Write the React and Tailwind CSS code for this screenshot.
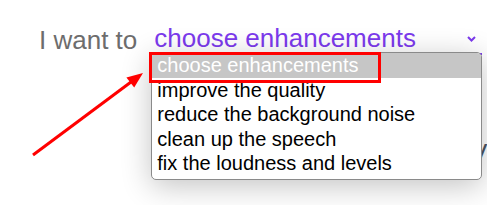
import React from 'react';

const options = [
  'choose enhancements',
  'improve the quality',
  'reduce the background noise',
  'clean up the speech',
  'fix the loudness and levels',
];

export default function App() {
  return (
    <div className="relative w-[487px] h-[205px] overflow-hidden bg-white font-['Liberation_Sans',Arial,sans-serif]">
      {/* sentence with select */}
      <div className="pt-[23px] pl-[39px] flex items-end">
        <span className="text-[26px] leading-[30px] text-[#6d6d6d] mr-[14px] whitespace-nowrap">I want to</span>
        <div className="relative w-[331px] flex items-center border-b-2 border-dashed border-[#7c3aed] pl-[3px]">
          <span className="text-[26px] leading-[30px] text-[#7c3aed] whitespace-nowrap">choose enhancements</span>
          <svg className="ml-auto mr-[6px] mt-[2px]" width="9" height="6" viewBox="0 0 9 6" fill="none">
            <path d="M1 1l3.5 3.5L8 1" stroke="#7c3aed" strokeWidth="2" />
          </svg>

          {/* open dropdown list */}
          <div className="absolute left-0 top-full mt-[-1px] w-[331px] z-10 bg-white border border-[#8a8a8a] rounded-[5px] overflow-hidden pb-[3px] shadow-[0_6px_30px_rgba(0,0,0,0.24)]">
            {options.map((opt, i) => (
              <div
                key={opt}
                className={`h-[24.6px] leading-[24.6px] pl-[5px] text-[20px] whitespace-nowrap ${i === 0 ? 'bg-[#c6c6c6] text-white' : 'text-black'}`}
              >
                {opt}
              </div>
            ))}
          </div>

          {/* highlight box */}
          <div className="absolute left-[-2px] top-[29px] w-[232px] h-[31px] border-[3px] border-[#ff0000] z-20"></div>
        </div>
      </div>

      {/* page text hidden behind the list */}
      <div className="mt-[83px] pl-[470px] text-[26px] leading-[30px] text-[#4b5563]">V</div>

      {/* annotation arrow */}
      <svg className="absolute top-0 left-0 pointer-events-none z-30" width="487" height="205" viewBox="0 0 487 205">
        <line x1="33" y1="155" x2="131" y2="82" stroke="#ff0000" strokeWidth="3" />
        <polygon points="143,73 134.2,87.6 126.4,77.4" fill="#ff0000" />
      </svg>
    </div>
  );
}
